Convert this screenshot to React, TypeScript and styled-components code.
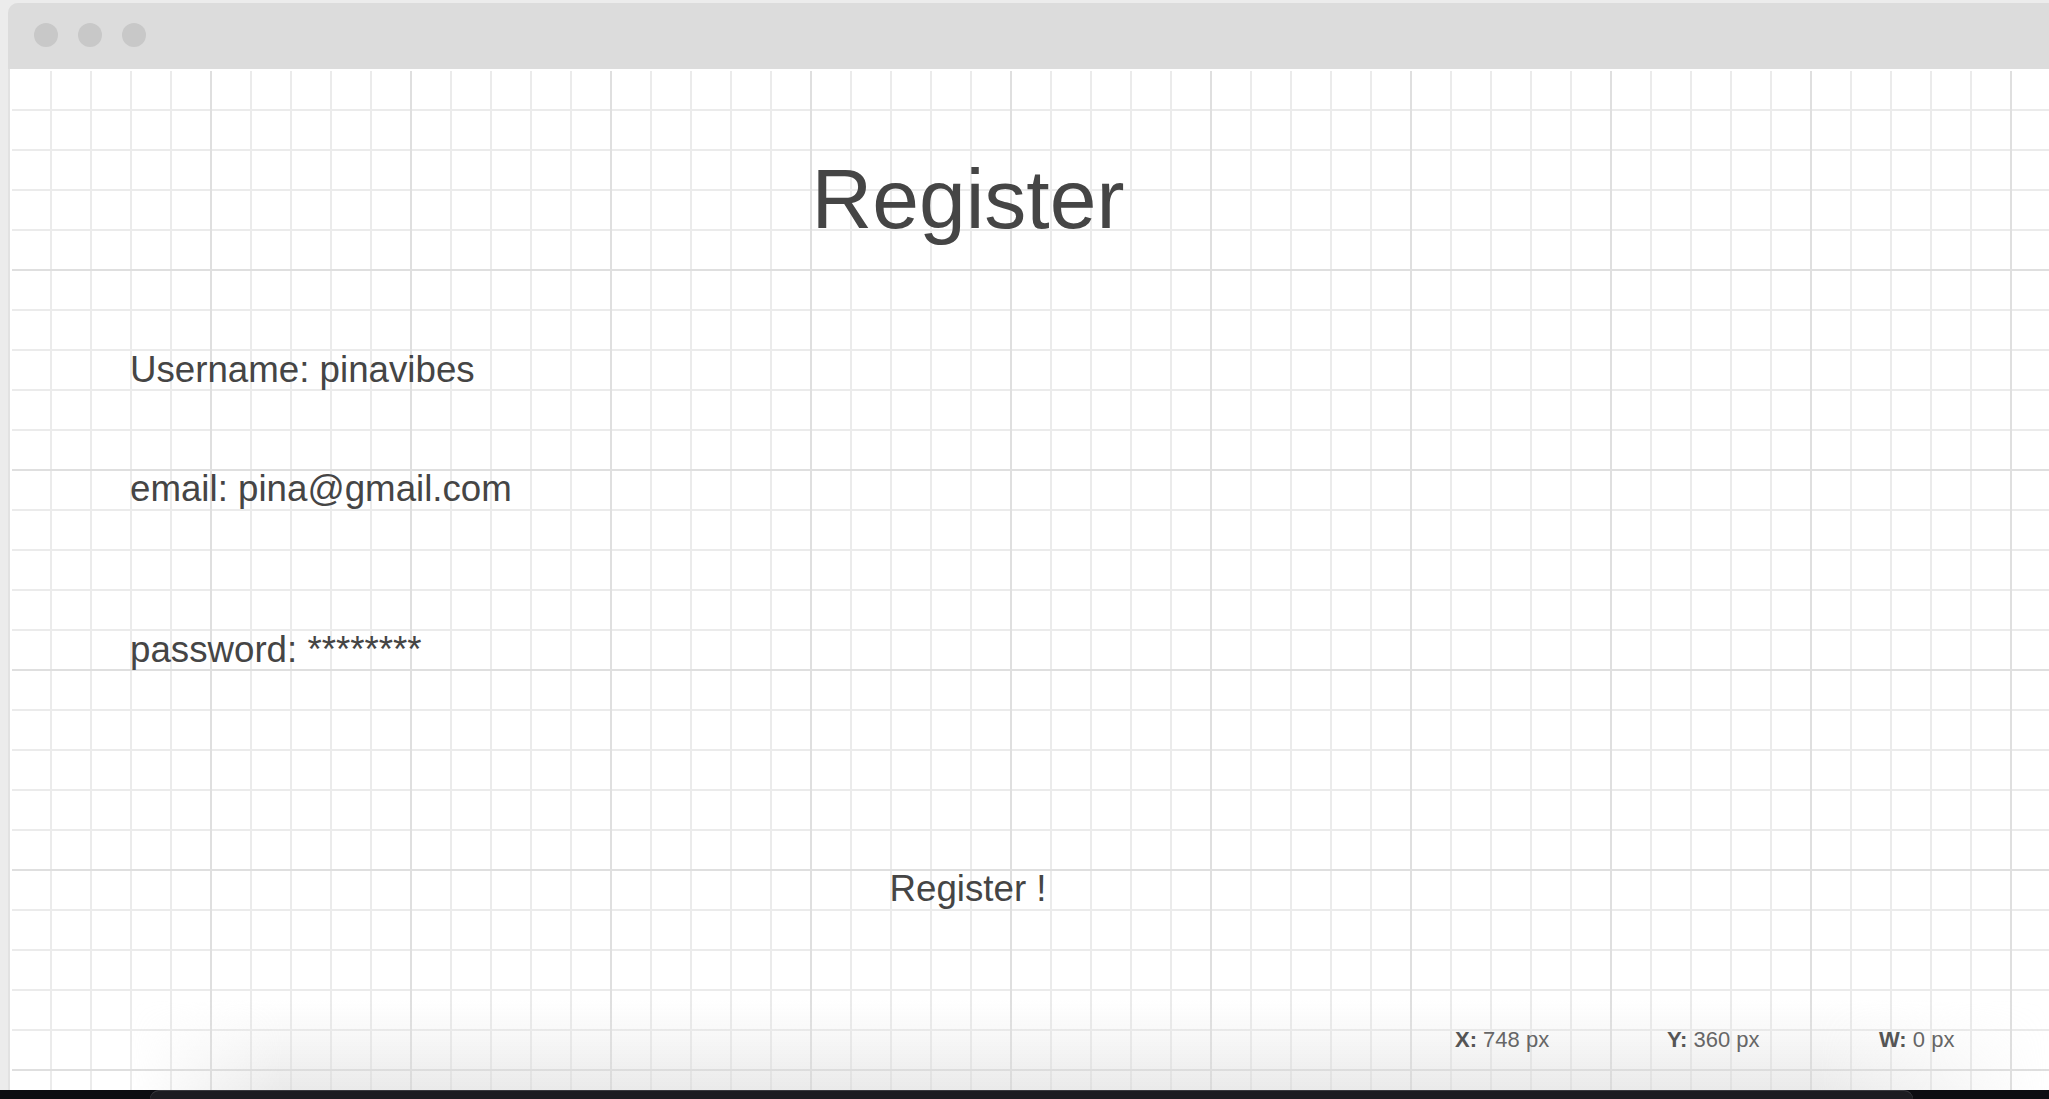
import React from "react";
import styled, { createGlobalStyle } from "styled-components";

const GlobalStyle = createGlobalStyle`
  html, body {
    margin: 0;
    padding: 0;
    background: #ececec;
    overflow: hidden;
  }
  * { box-sizing: border-box; }
`;

const Screen = styled.div`
  width: 100vw;
  height: 1099px;
  display: flex;
  flex-direction: column;
  font-family: "Liberation Sans", Arial, sans-serif;
`;

const Window = styled.div`
  flex: 1;
  margin: 3px 0 0 8px;
  display: flex;
  flex-direction: column;
  background: #e2e2e2;
  border-top-left-radius: 10px;
  overflow: hidden;
`;

const TitleBar = styled.div`
  height: 66px;
  flex: none;
  display: flex;
  align-items: flex-start;
  gap: 20px;
  padding: 20px 0 0 26px;
  background: #dcdcdc;
`;

const Light = styled.span`
  width: 24px;
  height: 24px;
  border-radius: 50%;
  background: #c8c8c8;
`;

const Canvas = styled.div`
  flex: 1;
  position: relative;
  display: flex;
  margin-left: 2px;
  padding: 2px 0 0 2px;
  background: #ffffff;
`;

const Paper = styled.div`
  flex: 1;
  display: flex;
  flex-direction: column;
  background-color: #ffffff;
  background-image:
    linear-gradient(to right, transparent 198px, #dfdfdf 198px),
    linear-gradient(to bottom, transparent 198px, #dfdfdf 198px),
    linear-gradient(to right, transparent 38px, #ebebeb 38px),
    linear-gradient(to bottom, transparent 38px, #ebebeb 38px);
  background-size: 200px 200px, 200px 200px, 40px 40px, 40px 40px;
`;

const Form = styled.form`
  width: 1912px;
  display: flex;
  flex-direction: column;
  padding-top: 86px;
  color: #454545;
`;

const Title = styled.h1`
  margin: 0;
  font-size: 84px;
  line-height: 84px;
  font-weight: 400;
  text-align: center;
`;

const Field = styled.div<{ $gap: number }>`
  margin-top: ${(p) => p.$gap}px;
  padding-left: 118px;
  font-size: 36.7px;
  line-height: 37px;
`;

const SubmitButton = styled.button`
  align-self: center;
  margin-top: 202px;
  padding: 0;
  border: none;
  background: none;
  color: #454545;
  font-family: inherit;
  font-size: 36.7px;
  line-height: 37px;
  cursor: pointer;
`;

const StatusPanel = styled.div`
  position: absolute;
  left: 120px;
  right: 0;
  bottom: 0;
  height: 90px;
  padding: 29px 0 0 1325px;

  &::before {
    content: "";
    position: absolute;
    inset: 0;
    background: linear-gradient(
      to bottom,
      rgba(225, 225, 225, 0) 0%,
      rgba(225, 225, 225, 0.28) 45%,
      rgba(215, 215, 215, 0.52) 100%
    );
    -webkit-mask-image: linear-gradient(to right, transparent 0%, #000 8%, #000 88%, transparent 100%);
    mask-image: linear-gradient(to right, transparent 0%, #000 8%, #000 88%, transparent 100%);
  }
`;

const Readouts = styled.div`
  position: relative;
  display: grid;
  grid-auto-flow: column;
  grid-auto-columns: 212px;
  font-size: 22px;
  line-height: 22px;
  color: #666;
`;

const Readout = styled.span`
  white-space: nowrap;
  b {
    color: #555;
    font-weight: 700;
  }
`;

const Dock = styled.div`
  height: 9px;
  flex: none;
  display: flex;
  background: #0c0c11;
  padding-left: 150px;
`;

const Shelf = styled.div`
  width: 1763px;
  border-radius: 10px 10px 0 0;
  background: #1c1c21;
  box-shadow: inset 0 1px 0 #3a3a3f;
`;

export default function App() {
  return (
    <>
      <GlobalStyle />
      <Screen>
        <Window>
          <TitleBar>
            <Light />
            <Light />
            <Light />
          </TitleBar>
          <Canvas>
            <Paper>
              <Form onSubmit={(e) => e.preventDefault()}>
                <Title>Register</Title>
                <Field $gap={110}>Username: pinavibes</Field>
                <Field $gap={82}>email: pina@gmail.com</Field>
                <Field $gap={124}>password: ********</Field>
                <SubmitButton type="submit">Register !</SubmitButton>
              </Form>
            </Paper>
            <StatusPanel>
              <Readouts>
                <Readout>
                  <b>X:</b> 748 px
                </Readout>
                <Readout>
                  <b>Y:</b> 360 px
                </Readout>
                <Readout>
                  <b>W:</b> 0 px
                </Readout>
              </Readouts>
            </StatusPanel>
          </Canvas>
        </Window>
        <Dock>
          <Shelf />
        </Dock>
      </Screen>
    </>
  );
}
